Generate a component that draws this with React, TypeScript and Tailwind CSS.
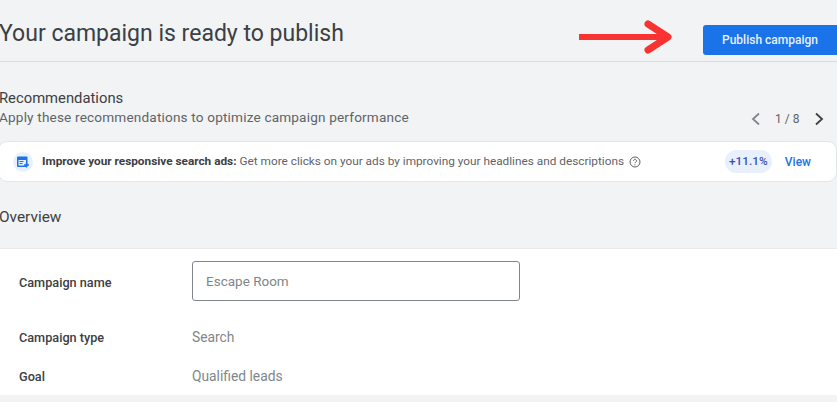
const font = { fontFamily: 'Roboto, sans-serif' };

const Row = ({ label, value }: { label: string; value: string }) => (
  <div className="flex items-center">
    <div className="w-[192px] pl-[19px] text-[12.7px] font-medium text-[#3c4043]">{label}</div>
    <div className="text-[13.8px] text-[#80868b]">{value}</div>
  </div>
);

export default function App() {
  return (
    <div className="w-[837px] h-[402px] overflow-hidden bg-[#f1f3f4]" style={font}>
      <div className="h-[62px] border-b border-[#dadce0] flex items-start">
        <h1 className="mt-[18px] -ml-px text-[23px] leading-[32px] text-[#3c4043] w-[579px]">Your campaign is ready to publish</h1>
        <svg className="mt-[20px] w-[96px] h-[34px]" viewBox="0 0 96 34">
          <path d="M1 17H90" stroke="#f93232" strokeWidth="6" fill="none" />
          <path d="M70 4L90 17L70 30" stroke="#f93232" strokeWidth="7" strokeLinecap="round" strokeLinejoin="round" fill="none" />
        </svg>
        <button className="ml-[29px] mt-[25px] w-[134px] h-[30px] rounded-l-[3px] bg-[#1a73e8] text-[#e8f0fe] text-[12px] font-medium">
          Publish campaign
        </button>
      </div>

      <div className="pt-[27px] flex items-start">
        <div className="w-[740px] -ml-px">
          <div className="text-[14.8px] leading-[18px] text-[#3c4043]">Recommendations</div>
          <div className="text-[13.6px] leading-[20px] tracking-[0.17px] text-[#5f6368]">Apply these recommendations to optimize campaign performance</div>
        </div>
        <div className="mt-[21px] ml-px flex items-center text-[12px] text-[#5f6368]">
          <svg className="w-[10px] h-[14px] ml-[11px]" viewBox="0 0 10 14">
            <path d="M8 1.5L2 7l6 5.5" stroke="#80868b" strokeWidth="1.8" fill="none" />
          </svg>
          <span className="ml-[14px] w-[30px]">1 / 8</span>
          <svg className="w-[10px] h-[14px] ml-[9px]" viewBox="0 0 10 14">
            <path d="M2 1.5L8 7l-6 5.5" stroke="#3c4043" strokeWidth="1.8" fill="none" />
          </svg>
        </div>
      </div>

      <div className="mt-[13px] -ml-[2px] h-[41px] bg-white border border-[#e3e5e8] rounded-[9px] flex items-center text-[11.8px]">
        <div className="ml-[14px] w-[20px] h-[20px] rounded-full bg-[#e8f0fe] flex items-center justify-center">
          <svg className="w-[14px] h-[14px]" viewBox="0 0 14 14">
            <rect x="1" y="1.5" width="10.5" height="10.5" rx="1" fill="#1a73e8" />
            <rect x="2.5" y="5" width="7.5" height="5.5" fill="#e8f0fe" />
            <path d="M3.5 6.5h4M3.5 8.5h3" stroke="#1a73e8" strokeWidth="1" />
            <path d="M10.5 7.5v5M8 10h5" stroke="#1a73e8" strokeWidth="1.4" />
          </svg>
        </div>
        <span className="ml-[9px] font-bold text-[#3c4043]">Improve your responsive search ads:</span>
        <span className="ml-[3px] text-[#5f6368]">Get more clicks on your ads by improving your headlines and descriptions</span>
        <svg className="ml-[5px] w-[12px] h-[12px]" viewBox="0 0 12 12">
          <circle cx="6" cy="6" r="5" stroke="#5f6368" strokeWidth="1" fill="none" />
          <path d="M4.5 4.8a1.5 1.5 0 1 1 2.3 1.3c-.5.3-.8.6-.8 1.1" stroke="#5f6368" strokeWidth="1" fill="none" />
          <circle cx="6" cy="8.8" r=".6" fill="#5f6368" />
        </svg>
        <span className="ml-auto h-[23px] w-[47px] rounded-full bg-[#e8f0fe] flex items-center justify-center font-medium text-[#3c4fb0]">+11.1%</span>
        <span className="ml-[13px] mr-[25px] text-[12px] text-[#1a73e8] font-medium">View</span>
      </div>

      <div className="mt-[25px] -ml-px text-[15.4px] leading-[20px] text-[#3c4043]">Overview</div>

      <div className="mt-[21px] h-[147px] bg-white border-t border-[#e8eaed] flex flex-col">
        <div className="mt-[12px] flex items-center">
          <div className="w-[192px] pl-[19px] pt-[4px] text-[12.7px] font-medium text-[#3c4043]">Campaign name</div>
          <div className="w-[328px] h-[40px] border border-[#80868b] rounded-[3px] pl-[13px] flex items-center text-[13.5px] text-[#80868b]">Escape Room</div>
        </div>
        <div className="mt-[26px]"><Row label="Campaign type" value="Search" /></div>
        <div className="mt-[18px]"><Row label="Goal" value="Qualified leads" /></div>
      </div>
    </div>
  );
}
